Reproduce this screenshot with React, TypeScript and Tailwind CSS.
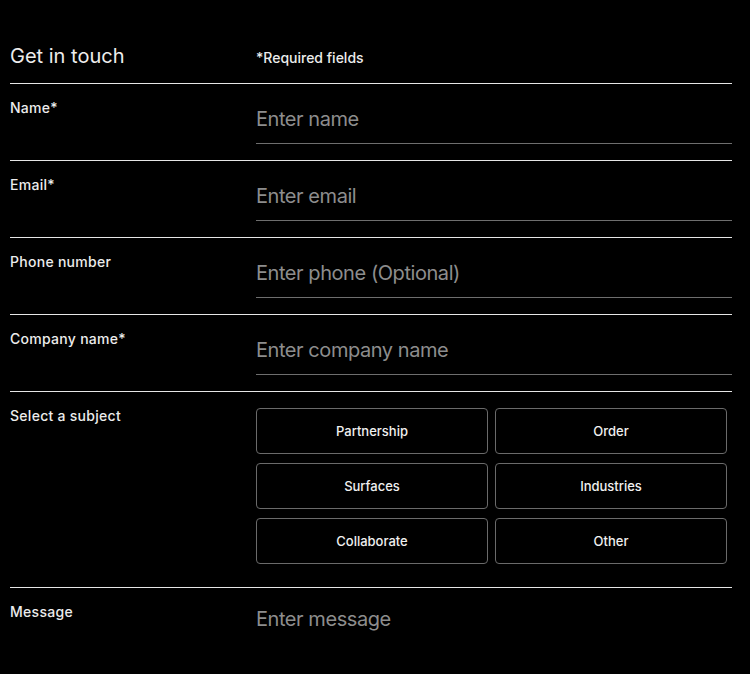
import React from "react";

const subjects = ["Partnership", "Order", "Surfaces", "Industries", "Collaborate", "Other"];

const fields = [
  { label: "Name*", placeholder: "Enter name", type: "text" },
  { label: "Email*", placeholder: "Enter email", type: "email" },
  { label: "Phone number", placeholder: "Enter phone (Optional)", type: "tel" },
  { label: "Company name*", placeholder: "Enter company name", type: "text" },
];

export default function App() {
  return (
    <div
      className="min-h-screen h-[674px] bg-black text-[#ececec] overflow-hidden"
      style={{ fontFamily: "Inter, 'Liberation Sans', sans-serif" }}
    >
      <form className="pl-[10px] pr-[18px]">
        {/* header */}
        <div className="flex items-baseline pt-[42px] pb-[13px] border-b border-[#e6e6e6]">
          <h2 className="w-[246px] text-[20px] leading-7 font-normal text-[#ededed]">Get in touch</h2>
          <span className="text-[14px] leading-5 font-medium text-[#ececec]">*Required fields</span>
        </div>

        {fields.map((f) => (
          <div key={f.label} className="flex border-b border-[#e6e6e6]">
            <label className="w-[246px] shrink-0 pt-[14px] text-[14px] leading-5 font-medium tracking-[0.02em]">{f.label}</label>
            <div className="flex-1 pt-[21px] pb-[16px]">
              <input
                type={f.type}
                placeholder={f.placeholder}
                className="w-full h-[39px] pb-[10px] bg-transparent border-b border-[#6e6e6e] text-[20px] leading-7 tracking-[-0.022em] text-white placeholder:text-[#8d8d8d] outline-none"
              />
            </div>
          </div>
        ))}

        {/* subject */}
        <div className="flex border-b border-[#e6e6e6]">
          <label className="w-[246px] shrink-0 pt-[14px] text-[14px] leading-5 font-medium tracking-[0.02em]">Select a subject</label>
          <div className="flex-1 pt-[16px] pb-[23px] pr-[5px]">
            <div className="grid grid-cols-2 gap-x-[7px] gap-y-[9px]">
              {subjects.map((s) => (
                <button
                  key={s}
                  type="button"
                  className="h-[46px] pt-[2px] rounded-[4px] border border-[#6a6a6a] text-[13px] font-medium text-[#f0f0f0] bg-black"
                >
                  {s}
                </button>
              ))}
            </div>
          </div>
        </div>

        {/* message */}
        <div className="flex">
          <label className="w-[246px] shrink-0 pt-[14px] text-[14px] leading-5 font-medium tracking-[0.02em]">Message</label>
          <div className="flex-1 pt-[17px]">
            <textarea
              placeholder="Enter message"
              rows={3}
              className="w-full resize-none bg-transparent text-[20px] leading-7 tracking-[-0.022em] text-white placeholder:text-[#8d8d8d] outline-none"
            />
          </div>
        </div>
      </form>
    </div>
  );
}
